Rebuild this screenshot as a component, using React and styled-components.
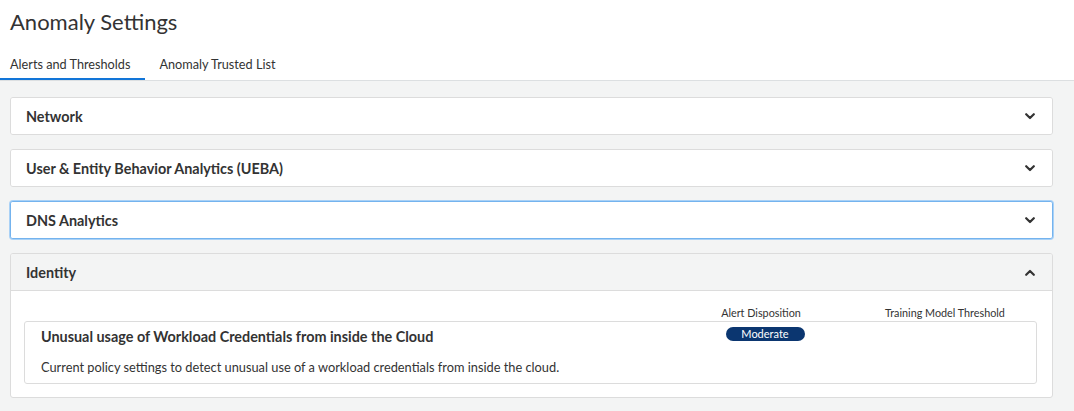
import React from "react";
import styled, { createGlobalStyle } from "styled-components";

const Global = createGlobalStyle`
  html, body { margin: 0; padding: 0; background: #f3f4f4; }
  body { font-family: Lato, "Open Sans", sans-serif; color: #333; }
`;

const Page = styled.div`
  width: 1074px;
  min-height: 411px;
  background: #f3f4f4;
`;

const Header = styled.header`
  background: #fff;
  border-bottom: 1px solid #dcdfe1;
`;

const Title = styled.h1`
  margin: 0;
  padding: 8px 10px 0;
  height: 37px;
  font-size: 22px;
  font-weight: 400;
  color: #333;
  line-height: 28px;
`;

const Tabs = styled.nav`
  display: flex;
  height: 35px;
`;

const Tab = styled.div`
  display: flex;
  align-items: center;
  padding: 5px 14px 0;
  font-size: 12.7px;
  color: #333;
  border-bottom: 2px solid ${(p) => (p.$active ? "#1275d8" : "transparent")};
  &:first-child { padding-left: 10px; padding-right: 15px; }
`;

const Content = styled.main`
  display: flex;
  flex-direction: column;
  gap: 14px;
  padding: 16px 21px 12px 10px;
`;

const Panel = styled.section`
  background: #fff;
  border: 1px solid ${(p) => (p.$focused ? "#74b3ee" : "#dcdcdc")};
  box-shadow: ${(p) => (p.$focused ? "0 0 0 1px #a9d1f6" : "none")};
  border-radius: 3px;
  overflow: hidden;
`;

const PanelHead = styled.div`
  display: flex;
  align-items: center;
  justify-content: space-between;
  height: 36px;
  padding: 0 17px 0 15px;
  background: ${(p) => (p.$open ? "#f3f4f4" : "#fff")};
  border-bottom: ${(p) => (p.$open ? "1px solid #dcdcdc" : "none")};
  font-size: 14.4px;
  font-weight: 700;
  color: #333;
`;

const PanelBody = styled.div`
  padding: 15px 15px 13px 13px;
`;

const ColLabels = styled.div`
  display: grid;
  grid-template-columns: 1fr 184px 184px;
  font-size: 10.8px;
  color: #333;
  height: 15px;
  line-height: 14px;
  & > span { text-align: center; }
`;

const Card = styled.div`
  display: grid;
  grid-template-columns: 1fr 184px 184px;
  grid-template-rows: 16px auto;
  row-gap: 14px;
  border: 1px solid #dcdcdc;
  border-radius: 3px;
  padding: 7px 0 8px 16px;
`;

const CardTitle = styled.div`
  font-size: 14.4px;
  font-weight: 700;
  color: #333;
  line-height: 16px;
  white-space: nowrap;
`;

const CardDesc = styled.div`
  grid-column: 1 / -1;
  font-size: 12.8px;
  color: #333;
  line-height: 16px;
`;

const PillCell = styled.div`
  display: flex;
  justify-content: center;
  align-items: flex-start;
  margin-top: -2px;
  padding-left: 10px;
`;

const Pill = styled.span`
  display: inline-flex;
  align-items: center;
  justify-content: center;
  width: 79px;
  height: 14px;
  border-radius: 8px;
  background: #0b3670;
  color: #fff;
  font-size: 11px;
  line-height: 14px;
`;

const Chevron = ({ up }) => (
  <svg width="10" height="7" viewBox="0 0 10 7" style={{ display: "block" }}>
    <polyline
      points={up ? "1.2,5.8 5,2 8.8,5.8" : "1.2,1.2 5,5 8.8,1.2"}
      fill="none"
      stroke="#333"
      strokeWidth="2.2"
      strokeLinecap="round"
      strokeLinejoin="round"
    />
  </svg>
);

const Accordion = ({ title, focused }) => (
  <Panel $focused={focused}>
    <PanelHead>
      <span>{title}</span>
      <Chevron />
    </PanelHead>
  </Panel>
);

export default function App() {
  return (
    <Page>
      <Global />
      <Header>
        <Title>Anomaly Settings</Title>
        <Tabs>
          <Tab $active>Alerts and Thresholds</Tab>
          <Tab>Anomaly Trusted List</Tab>
        </Tabs>
      </Header>
      <Content>
        <Accordion title="Network" />
        <Accordion title="User & Entity Behavior Analytics (UEBA)" />
        <Accordion title="DNS Analytics" focused />
        <Panel>
          <PanelHead $open>
            <span>Identity</span>
            <Chevron up />
          </PanelHead>
          <PanelBody>
            <ColLabels>
              <span />
              <span>Alert Disposition</span>
              <span>Training Model Threshold</span>
            </ColLabels>
            <Card>
              <CardTitle>Unusual usage of Workload Credentials from inside the Cloud</CardTitle>
              <PillCell>
                <Pill>Moderate</Pill>
              </PillCell>
              <div />
              <CardDesc>
                Current policy settings to detect unusual use of a workload credentials from inside the cloud.
              </CardDesc>
            </Card>
          </PanelBody>
        </Panel>
      </Content>
    </Page>
  );
}
